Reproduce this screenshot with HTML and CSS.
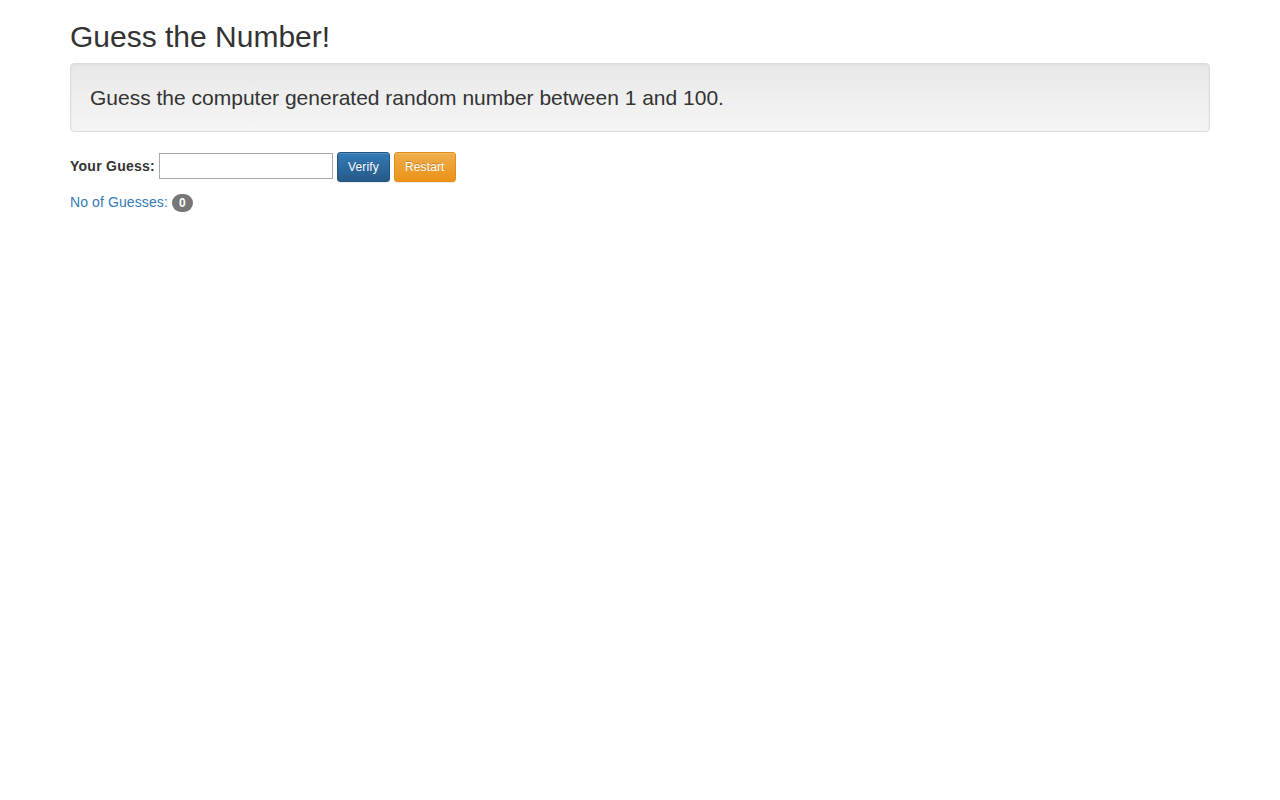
FILE: index.html
```html
<!DOCTYPE html>
<html>
<head>
<meta charset="utf-8">
<link rel="stylesheet" href="styles.css">
</head>
<body>
<div class="container">
  <h2 class="title">Guess the Number!</h2>
  <div class="well">
    <p class="lead">Guess the computer generated random number between 1 and 100.</p>
  </div>
  <form class="guess-form">
    <label class="guess-label" for="guess">Your Guess:</label>
    <input id="guess" class="guess-input" type="text">
    <button type="button" class="btn btn-primary">Verify</button>
    <button type="button" class="btn btn-warning">Restart</button>
  </form>
  <p class="count"><a href="#" class="count-link">No of Guesses: <span class="badge">0</span></a></p>
</div>
</body>
</html>
```

FILE: styles.css
```css
* { box-sizing: border-box; }
html, body { margin: 0; padding: 0; background: #fff; }
body {
  font-family: "Liberation Sans", Arial, Helvetica, sans-serif;
  font-size: 14px;
  line-height: 1.42857;
  color: #333;
}
.container {
  width: 1170px;
  margin: 0 auto;
  padding: 0 15px;
}
.title {
  font-size: 30px;
  font-weight: 500;
  line-height: 1.1;
  margin: 20px 0 10px;
  color: #333;
}
.well {
  min-height: 20px;
  padding: 19px;
  margin-bottom: 20px;
  border: 1px solid #dcdcdc;
  border-radius: 4px;
  background: linear-gradient(to bottom, #e8e8e8 0, #f5f5f5 100%);
  box-shadow: inset 0 1px 3px rgba(0,0,0,.05), 0 1px 0 rgba(255,255,255,.1);
}
.lead {
  margin: 0;
  font-size: 21px;
  line-height: 29px;
}
.guess-form {
  display: flex;
  align-items: center;
  gap: 4px;
  margin: 0 0 11px;
}
.guess-label {
  font-weight: bold;
  font-size: 14px;
  letter-spacing: 0.25px;
}
.guess-input {
  width: 174px;
  height: 26px;
  border: 1px solid #a9a9a9;
  padding: 2px 4px;
  font-family: inherit;
  font-size: 13px;
  margin: 0;
  align-self: flex-start;
  margin-top: 1px;
}
.btn {
  font-family: inherit;
  font-size: 12px;
  line-height: 18px;
  padding: 5px 10px;
  border-radius: 3px;
  color: #fff;
  cursor: pointer;
  letter-spacing: 0.15px;
  text-shadow: 0 -1px 0 rgba(0,0,0,.2);
  box-shadow: inset 0 1px 0 rgba(255,255,255,.15), 0 1px 1px rgba(0,0,0,.075);
  margin: 0;
}
.btn-primary {
  background: linear-gradient(to bottom, #337ab7 0, #265a88 100%);
  border: 1px solid #245580;
}
.btn-warning {
  background: linear-gradient(to bottom, #f0ad4e 0, #eb9316 100%);
  border: 1px solid #e38d13;
}
.count {
  margin: 0;
}
.count-link {
  color: #337ab7;
  text-decoration: none;
  letter-spacing: 0.1px;
}
.badge {
  display: inline-block;
  min-width: 10px;
  padding: 3px 7px;
  font-size: 12px;
  font-weight: bold;
  line-height: 1;
  color: #fff;
  text-align: center;
  white-space: nowrap;
  vertical-align: middle;
  background-color: #777;
  border-radius: 10px;
}
```
